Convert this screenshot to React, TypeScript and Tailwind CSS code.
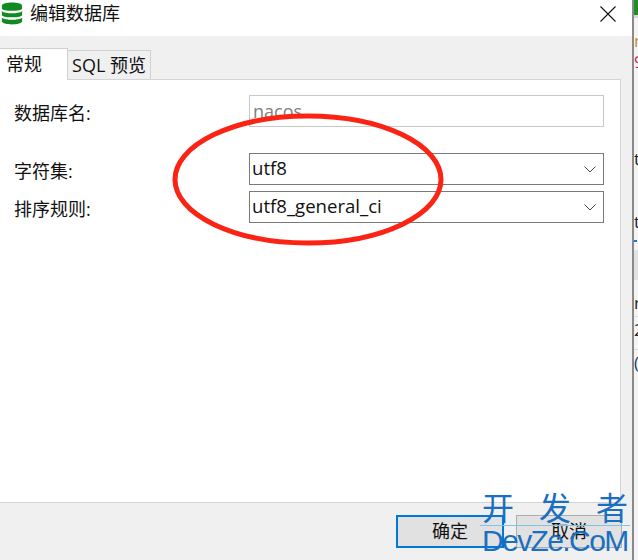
const cjk = "font-['Open_Sans','Noto_Sans_CJK_SC',sans-serif]";

function Chevron() {
  return (
    <svg width="12" height="7" viewBox="0 0 12 7" className="mr-[7px] shrink-0" fill="none" stroke="#444" strokeWidth="1">
      <path d="M0.5 0.5 L6 6 L11.5 0.5" />
    </svg>
  );
}

function DbIcon() {
  return (
    <svg width="22" height="23" viewBox="0 0 22 25">
      <path d="M0 4 C0 -0.5 22 -0.5 22 4 V7 C22 10.5 0 10.5 0 7 Z" fill="#128a22" />
      <path d="M0 10 C4 13 18 13 22 10 V14 C22 17.5 0 17.5 0 14 Z" fill="#128a22" />
      <path d="M0 17 C4 20 18 20 22 17 V21 C22 25.5 0 25.5 0 21 Z" fill="#128a22" />
    </svg>
  );
}

function Row({ label, value, mt }: { label: string; value: string; mt: string }) {
  return (
    <div className={`flex items-center ${mt}`}>
      <div className="w-[249px] pl-[14px] pt-[5px] text-[18px] leading-[27px] text-[#111]">{label}</div>
      <div className="flex h-[32px] w-[355px] items-center justify-between border border-[#7a7a7a] bg-white">
        <span className="pb-[2px] pl-[2px] text-[18.6px] leading-none text-[#111]">{value}</span>
        <Chevron />
      </div>
    </div>
  );
}

function SideStrip() {
  return (
    <div className="flex h-[560px] w-[6px] shrink-0 flex-col overflow-hidden border-l-2 border-[#8a8a8a] bg-[#f4f4f4] text-[17px] leading-[17px]">
      <div className="h-[15px] shrink-0 bg-[#1f8f2a]" />
      <div className="h-[3px] shrink-0 bg-[#d8d8d8]" />
      <div className="mt-[14px] h-[17px] shrink-0 text-[#c48a3a]">n</div>
      <div className="mt-[4px] h-[17px] shrink-0 text-[#e0204a]">9</div>
      <div className="mt-[80px] h-[17px] shrink-0 text-[#222]">t</div>
      <div className="mt-[46px] h-[17px] shrink-0 text-[#222]">t</div>
      <div className="mt-[10px] h-[2px] w-[3px] shrink-0 bg-[#1a73e8]" />
      <div className="mt-[8px] h-[30px] shrink-0 bg-[#e2e2e2]" />
      <div className="mt-[14px] h-[17px] shrink-0 text-[#222]">r</div>
      <div className="mt-[5px] h-[25px] shrink-0 border-t border-[#ddd] pt-[4px] text-[#222]">2</div>
      <div className="mt-[8px] h-[25px] shrink-0 border-t border-[#ddd] pt-[4px] text-[#1a3a6a]">(</div>
    </div>
  );
}

export default function App() {
  return (
    <div className={`relative flex h-[560px] w-[638px] overflow-hidden bg-white ${cjk}`}>
      <div className="flex h-full w-[632px] shrink-0 flex-col bg-[#f0f0f0]">
        <div className="flex h-[36px] shrink-0 items-start bg-white pt-[2px]">
          <div className="ml-[1px]"><DbIcon /></div>
          <div className="ml-[7px] text-[18px] leading-[23px] text-[#111]">编辑数据库</div>
          <svg className="ml-auto mr-[16px] mt-[4px]" width="16" height="16" viewBox="0 0 16 16" stroke="#111" strokeWidth="1.1">
            <path d="M0.5 0.5 L15.5 15.5 M15.5 0.5 L0.5 15.5" />
          </svg>
        </div>

        <div className="mt-[12px] flex h-[31px] shrink-0 items-end">
          <div className="relative z-10 -mb-px flex h-[32px] w-[68px] items-center border-r border-t border-[#d0d0d0] bg-white pl-[6px] text-[18px] text-[#111]">常规</div>
          <div className="flex h-[29px] w-[83px] items-center justify-center border-r border-t border-[#d0d0d0] bg-[#f0f0f0] text-[18px] text-[#111]">SQL 预览</div>
        </div>

        <div className="h-[424px] w-[621px] shrink-0 border-r border-t border-b border-[#d4d4d4] bg-white">
          <div className="flex items-center pt-[15px]">
            <div className="w-[249px] pl-[14px] pt-[5px] text-[18px] leading-[27px] text-[#111]">数据库名:</div>
            <div className="flex h-[32px] w-[355px] items-center border border-[#c8c8c8] bg-white pl-[3px] text-[18px] text-[#808080]">nacos</div>
          </div>
          <Row label="字符集:" value="utf8" mt="mt-[26px]" />
          <Row label="排序规则:" value="utf8_general_ci" mt="mt-[6px]" />
        </div>

        <div className="flex flex-1 items-start pl-[396px] pt-[12px]">
          <div className="flex h-[33px] w-[108px] items-center justify-center border-[2px] border-[#0078d7] bg-[#e1e1e1] text-[18px] text-[#111]">确定</div>
          <div className="ml-[12px] flex h-[33px] w-[106px] items-center justify-center border border-[#adadad] bg-[#e1e1e1] text-[18px] text-[#111]">取消</div>
        </div>
      </div>
      <SideStrip />

      <svg className="absolute left-[172px] top-[113px]" width="272" height="134" viewBox="0 0 272 134" fill="none">
        <ellipse cx="136" cy="66.5" rx="133" ry="63.5" stroke="#fb2414" strokeWidth="5" />
      </svg>

      <div className="absolute left-[480px] top-[491px] w-[150px] text-[#1a6fc0]">
        <div className="flex h-[34px] items-center justify-between px-[2px] text-[32px] leading-none">
          <span>开</span><span>发</span><span>者</span>
        </div>
        <div className="h-px bg-[#7fc4e8]" />
        <div className="pl-[2px] text-[30px] leading-[30px] tracking-[-1.6px] whitespace-nowrap font-['Liberation_Sans',sans-serif]">DevZe.CoM</div>
      </div>
    </div>
  );
}
